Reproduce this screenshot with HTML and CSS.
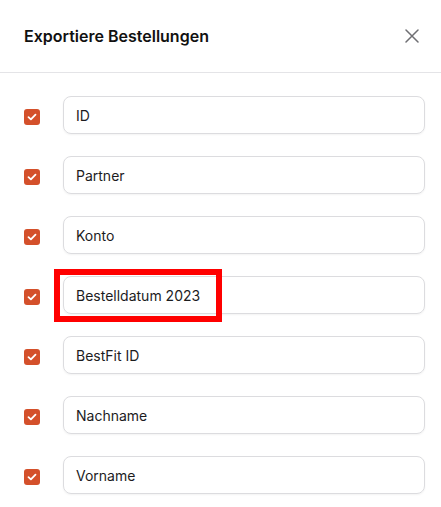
FILE: index.html
```html
<!DOCTYPE html>
<html lang="de">
<head>
<meta charset="utf-8">
<title>Exportiere Bestellungen</title>
<link rel="stylesheet" href="styles.css">
</head>
<body>
<div class="dialog">
  <header class="header">
    <h1 class="title">Exportiere Bestellungen</h1>
    <button class="close" aria-label="Schließen">
      <svg width="14" height="14" viewBox="0 0 14 14"><path d="M1 1L13 13M13 1L1 13" stroke="#6f6f73" stroke-width="1.5" stroke-linecap="round" fill="none"/></svg>
    </button>
  </header>
  <div class="list">
    <div class="row">
      <span class="check"><svg width="10" height="8" viewBox="0 0 10 8"><path d="M1.5 4.2L3.9 6.4L8.5 1.6" stroke="#fff" stroke-width="1.8" fill="none" stroke-linecap="round" stroke-linejoin="round"/></svg></span>
      <div class="field">ID</div>
    </div>
    <div class="row">
      <span class="check"><svg width="10" height="8" viewBox="0 0 10 8"><path d="M1.5 4.2L3.9 6.4L8.5 1.6" stroke="#fff" stroke-width="1.8" fill="none" stroke-linecap="round" stroke-linejoin="round"/></svg></span>
      <div class="field">Partner</div>
    </div>
    <div class="row">
      <span class="check"><svg width="10" height="8" viewBox="0 0 10 8"><path d="M1.5 4.2L3.9 6.4L8.5 1.6" stroke="#fff" stroke-width="1.8" fill="none" stroke-linecap="round" stroke-linejoin="round"/></svg></span>
      <div class="field">Konto</div>
    </div>
    <div class="row">
      <span class="check"><svg width="10" height="8" viewBox="0 0 10 8"><path d="M1.5 4.2L3.9 6.4L8.5 1.6" stroke="#fff" stroke-width="1.8" fill="none" stroke-linecap="round" stroke-linejoin="round"/></svg></span>
      <div class="field">Bestelldatum 2023</div>
      <span class="highlight"></span>
    </div>
    <div class="row">
      <span class="check"><svg width="10" height="8" viewBox="0 0 10 8"><path d="M1.5 4.2L3.9 6.4L8.5 1.6" stroke="#fff" stroke-width="1.8" fill="none" stroke-linecap="round" stroke-linejoin="round"/></svg></span>
      <div class="field">BestFit ID</div>
    </div>
    <div class="row">
      <span class="check"><svg width="10" height="8" viewBox="0 0 10 8"><path d="M1.5 4.2L3.9 6.4L8.5 1.6" stroke="#fff" stroke-width="1.8" fill="none" stroke-linecap="round" stroke-linejoin="round"/></svg></span>
      <div class="field">Nachname</div>
    </div>
    <div class="row">
      <span class="check"><svg width="10" height="8" viewBox="0 0 10 8"><path d="M1.5 4.2L3.9 6.4L8.5 1.6" stroke="#fff" stroke-width="1.8" fill="none" stroke-linecap="round" stroke-linejoin="round"/></svg></span>
      <div class="field">Vorname</div>
    </div>
  </div>
</div>
</body>
</html>
```

FILE: styles.css
```css
* { box-sizing: border-box; }
html, body {
  margin: 0;
  padding: 0;
  background: #ffffff;
  font-family: Inter, "Noto Sans", sans-serif;
  color: #1a1a1a;
}
.dialog {
  width: 441px;
  height: 507px;
  overflow: hidden;
  background: #fff;
}
.header {
  height: 73px;
  display: flex;
  align-items: center;
  justify-content: space-between;
  padding: 0 22px 0 24px;
  border-bottom: 1px solid #e4e4e7;
}
.title {
  margin: 0;
  font-size: 16px;
  font-weight: 600;
  color: #111111;
  letter-spacing: 0;
}
.close {
  border: 0;
  background: transparent;
  padding: 0;
  width: 14px;
  height: 14px;
  display: flex;
  cursor: pointer;
}
.list {
  display: flex;
  flex-direction: column;
  gap: 22px;
  padding: 23px 16px 0 24px;
}
.row {
  position: relative;
  display: flex;
  align-items: center;
  gap: 23px;
}
.check {
  width: 16px;
  height: 16px;
  border-radius: 3px;
  background: #d4502b;
  display: flex;
  align-items: center;
  justify-content: center;
  flex: none;
  margin-top: 3px;
}
.field {
  flex: 1;
  height: 38px;
  border: 1px solid #dcdcdf;
  border-radius: 8px;
  padding: 0 12px;
  display: flex;
  align-items: center;
  font-size: 14px;
  color: #1c1c1e;
  box-shadow: 0 1px 2px rgba(0,0,0,0.05);
}
.highlight {
  position: absolute;
  left: 30px;
  top: -7px;
  width: 168px;
  height: 53px;
  border: 6px solid #ff0000;
  pointer-events: none;
}
```
